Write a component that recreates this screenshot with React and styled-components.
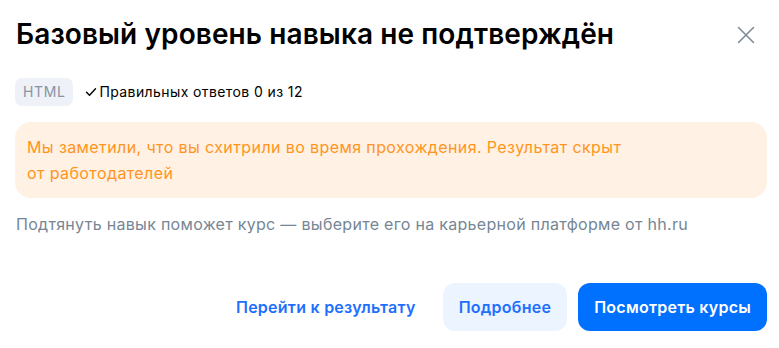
import React from "react";
import styled, { createGlobalStyle } from "styled-components";

const Global = createGlobalStyle`
  html, body { margin: 0; padding: 0; background: #fff; }
  body { font-family: Inter, "Noto Sans", Arial, sans-serif; color: #000; -webkit-font-smoothing: antialiased; }
  * { box-sizing: border-box; }
`;

const Dialog = styled.div`
  width: 779px;
  height: 348px;
  padding: 16px 12px 0 15px;
  display: flex;
  flex-direction: column;
`;

const Header = styled.div`
  display: flex;
  align-items: flex-start;
  justify-content: space-between;
`;

const Title = styled.h1`
  margin: 0;
  font-size: 28px;
  line-height: 36px;
  font-weight: 600;
  letter-spacing: 0.1px;
  color: #000;
  padding-left: 1px;
`;

const Close = styled.button`
  border: 0;
  background: none;
  padding: 0;
  margin: 10px 12px 0 0;
  width: 18px;
  height: 18px;
  color: #7f8c99;
  cursor: pointer;
  display: flex;
`;

const Meta = styled.div`
  margin-top: 26px;
  display: flex;
  align-items: center;
  gap: 12px;
`;

const Tag = styled.span`
  display: inline-flex;
  align-items: center;
  height: 28px;
  padding: 0 8px;
  border-radius: 7px;
  background: #eef1f7;
  color: #8a93a3;
  font-size: 14px;
  line-height: 20px;
  letter-spacing: 0.6px;
`;

const Result = styled.span`
  display: inline-flex;
  align-items: center;
  gap: 2px;
  font-size: 14px;
  line-height: 20px;
  letter-spacing: 0.4px;
  color: #000;
`;

const Notice = styled.div`
  margin-top: 16px;
  padding: 12px 12px;
  border-radius: 16px;
  background: #fff1e3;
  color: #ff951f;
  font-size: 16px;
  line-height: 26px;
  letter-spacing: 0.4px;
`;

const NoticeText = styled.p`
  margin: 0;
  max-width: 610px;
`;

const Hint = styled.p`
  margin: 14px 0 0;
  padding-left: 1px;
  font-size: 16px;
  line-height: 24px;
  letter-spacing: 0.3px;
  color: #768694;
`;

const Actions = styled.div`
  margin-top: 47px;
  display: flex;
  justify-content: flex-end;
  gap: 11px;
`;

const Button = styled.button`
  height: 48px;
  padding: 0 16px;
  border: 0;
  border-radius: 12px;
  font-family: inherit;
  font-size: 16px;
  font-weight: 600;
  letter-spacing: 0.25px;
  cursor: pointer;
  background: ${(p) =>
    p.$variant === "primary" ? "#0070ff" : p.$variant === "secondary" ? "#ecf4ff" : "transparent"};
  color: ${(p) => (p.$variant === "primary" ? "#fff" : "#1f6fff")};
`;

export default function App() {
  return (
    <>
      <Global />
      <Dialog>
        <Header>
          <Title>Базовый уровень навыка не подтверждён</Title>
          <Close aria-label="Закрыть">
            <svg width="18" height="18" viewBox="0 0 18 18" fill="none">
              <path d="M1.5 1.5L16.5 16.5M16.5 1.5L1.5 16.5" stroke="currentColor" strokeWidth="1.6" strokeLinecap="round" />
            </svg>
          </Close>
        </Header>
        <Meta>
          <Tag>HTML</Tag>
          <Result>
            <svg width="12" height="12" viewBox="0 0 12 12" fill="none">
              <path d="M1.5 6.2L4.5 9.2L10.5 2.8" stroke="#000" strokeWidth="1.4" strokeLinecap="round" strokeLinejoin="round" />
            </svg>
            Правильных ответов 0 из 12
          </Result>
        </Meta>
        <Notice>
          <NoticeText>
            Мы заметили, что вы схитрили во время прохождения. Результат скрыт от работодателей
          </NoticeText>
        </Notice>
        <Hint>Подтянуть навык поможет курс — выберите его на карьерной платформе от hh.ru</Hint>
        <Actions>
          <Button>Перейти к результату</Button>
          <Button $variant="secondary">Подробнее</Button>
          <Button $variant="primary">Посмотреть курсы</Button>
        </Actions>
      </Dialog>
    </>
  );
}
